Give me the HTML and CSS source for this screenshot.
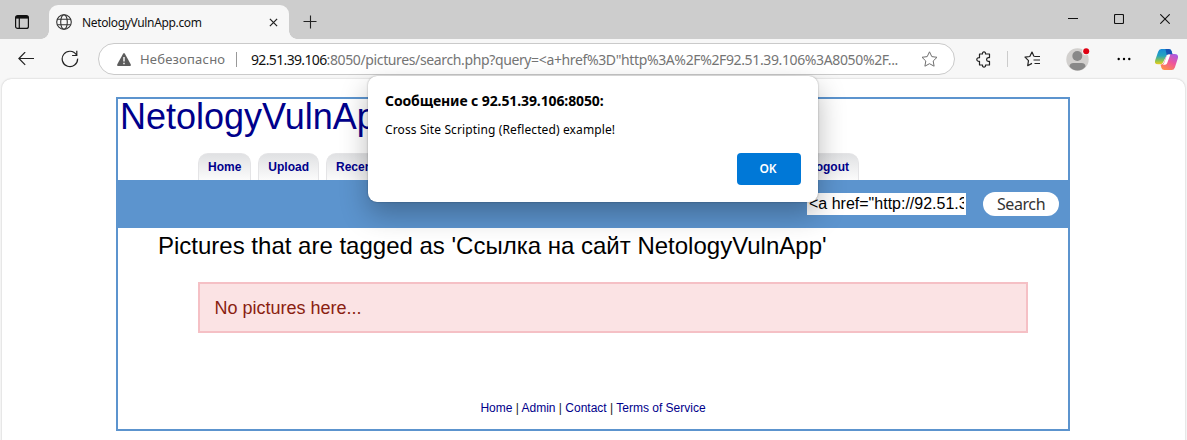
FILE: index.html
```html
<!DOCTYPE html>
<html lang="ru">
<head>
<meta charset="utf-8">
<title>NetologyVulnApp.com</title>
<link rel="stylesheet" href="styles.css">
</head>
<body>
<div class="browser">
  <header class="titlebar">
    <svg class="workspace" width="14" height="14" viewBox="0 0 14 14" fill="none" stroke="#111" stroke-width="1.2"><rect x=".6" y=".6" width="12.8" height="12.8" rx="2"/><path d="M1 2.3h12" stroke-width="2.6"/><path d="M4.3 3v10"/></svg>
    <div class="tab">
      <svg width="16" height="16" viewBox="0 0 16 16" fill="none" stroke="#333" stroke-width="1.1"><circle cx="8" cy="8" r="7.3"/><ellipse cx="8" cy="8" rx="3.3" ry="7.3"/><path d="M1.3 5.3h13.4M1.3 10.7h13.4"/></svg>
      <span class="tab-title">NetologyVulnApp.com</span>
      <svg width="9" height="9" viewBox="0 0 10 10" stroke="#222" stroke-width="1.4"><path d="M1 1l8 8M9 1L1 9"/></svg>
    </div>
    <svg class="plus" width="14" height="14" viewBox="0 0 14 14" stroke="#222" stroke-width="1.1"><path d="M7.5 .5v13M.5 6.5h13"/></svg>
    <div class="window-buttons">
      <svg width="10" height="10" viewBox="0 0 10 10" stroke="#111"><path d="M0 4.5h10"/></svg>
      <svg width="10" height="10" viewBox="0 0 10 10" fill="none" stroke="#111" stroke-width="1.1"><rect x=".5" y=".5" width="9" height="9" rx="1"/></svg>
      <svg width="10" height="10" viewBox="0 0 10 10" stroke="#111" stroke-width="1.1"><path d="M.3 .3l9.4 9.4M9.7 .3L.3 9.7"/></svg>
    </div>
  </header>
  <div class="toolbar">
    <svg class="back" width="16" height="14" viewBox="0 0 16 14" fill="none" stroke="#222" stroke-width="1.2"><path d="M16 6.5H1M7.2 .1L.9 6.5l6.3 6.4"/></svg>
    <svg class="reload" width="18" height="18" viewBox="0 0 18 18" fill="none" stroke="#222" stroke-width="1.2"><path d="M16.6 8.6A7.7 7.7 0 1 1 15.4 4.8M15.8 .8v4.7h-4.7"/></svg>
    <div class="address">
      <svg width="14" height="13" viewBox="0 0 14 13"><path d="M6.1.7Q7-.6 7.9.7l5.8 10.6Q14.3 13 13 13H1Q-.3 13 .3 11.3z" fill="#5c5c5c"/><path d="M7 4v4.6M7 9.8v1.5" stroke="#fff" stroke-width="1.4"/></svg>
      <span class="insecure">Небезопасно</span>
      <span class="bar"></span>
      <span class="url"><b>92.51.39.106</b>:8050/pictures/search.php?query=&lt;a+href%3D"http%3A%2F%2F92.51.39.106%3A8050%2F...</span>
      <svg class="star" width="17" height="16" viewBox="0 0 17 16" fill="none" stroke="#707070" stroke-linejoin="round"><path d="M8.5.8l2.3 4.8 5.2.7-3.8 3.7.9 5.2-4.6-2.5-4.6 2.5.9-5.2L1 6.3l5.2-.7z"/></svg>
    </div>
    <svg class="puzzle" width="16" height="17" viewBox="0 0 16 17" fill="none" stroke="#222" stroke-width="1.2" stroke-linejoin="round"><path d="M3.5 3h3C6 .2 10 .2 9.5 3h4v3.6h-1.2c-2.3.2-2.3 3.6 0 3.8h1.2V14h-4c.5 2.8-3.5 2.8-3 0h-3v-3.7c-3.6.4-3.6-4 0-3.6z"/></svg>
    <span class="separator"></span>
    <svg class="favorites" width="17" height="16" viewBox="0 0 17 16" fill="none" stroke="#222" stroke-width="1.2" stroke-linejoin="round"><path d="M10 5.5L8 1 5.8 5.5 1 6.2l3.5 3.5-.8 5 4.3-2.3M10.3 5.5H16M9.5 9H16M10.5 12.5H16"/></svg>
    <svg class="avatar" width="24" height="24" viewBox="0 0 24 24"><circle cx="11.5" cy="12.5" r="11.2" fill="#d2d0ce"/><circle cx="11.3" cy="9" r="5" fill="#888"/><path d="M3.5 19.5q0-3.5 4-3.5h8q4 0 4 3.5-3 4-8 4t-8-4z" fill="#888"/><circle cx="20.2" cy="4.2" r="4" fill="#f7f7f7"/><circle cx="20.2" cy="4.2" r="3" fill="#df0012"/></svg>
    <svg class="more" width="14" height="4" viewBox="0 0 14 4"><circle cx="1.7" cy="2" r="1.2"/><circle cx="7" cy="2" r="1.2"/><circle cx="12.3" cy="2" r="1.2"/></svg>
    <svg class="copilot" width="23" height="21" viewBox="0 0 22 20.5" preserveAspectRatio="none">
      <defs>
        <linearGradient id="cool" x1="0" y1="0" x2="0" y2="1"><stop stop-color="#168ad8"/><stop offset=".45" stop-color="#26a5bd"/><stop offset=".75" stop-color="#8bc252"/><stop offset="1" stop-color="#f2cd16"/></linearGradient>
        <linearGradient id="warm" x1=".9" y1="0" x2=".3" y2="1"><stop stop-color="#a35be8"/><stop offset=".5" stop-color="#ee549c"/><stop offset="1" stop-color="#ff8b4a"/></linearGradient>
      </defs>
      <path d="M6 0h7q2.2 0 2.8 2l.9 3.2h-3.5q-2 0-2.7 2.1L8.2 12q-.9 3-3.2 3H3q-4 0-2.8-4L3 2.6Q3.8 0 6 0z" fill="url(#cool)"/>
      <path d="M16 20.5H9q-2.2 0-2.8-2l-.9-3.2q2.6 0 3.5-2.7l1.8-5Q11.6 5 14 5h5q4 0 2.8 4.2L19 18q-.8 2.5-3 2.5z" fill="url(#warm)"/>
      <path d="M10 0h3q2.2 0 2.8 2l.9 3.2h-3.5q-1.3 0-1.9.8z" fill="#1853b5"/>
      <path d="M11.3 6.4q.6-1 2.2-1h1.2L11.6 14q-.5 1.4-1.9 1.4H7.4q.9-.6 1.3-1.7z" fill="#fff"/>
    </svg>
  </div>
  <main class="viewport">
    <div class="site">
      <h1>NetologyVulnApp.com</h1>
      <nav class="menu"><a>Home</a><a>Upload</a><a>Recent</a><a class="logout">Logout</a></nav>
      <div class="searchbar"><div class="query">&lt;a href="http://92.51.39.106:8050/"&gt;</div><button>Search</button></div>
      <h2>Pictures that are tagged as 'Ссылка на сайт NetologyVulnApp'</h2>
      <div class="notice">No pictures here...</div>
      <footer><a>Home</a> | <a>Admin</a> | <a>Contact</a> | <a>Terms of Service</a></footer>
    </div>
  </main>
  <div class="dialog" role="dialog">
    <strong>Сообщение с 92.51.39.106:8050:</strong>
    <p>Cross Site Scripting (Reflected) example!</p>
    <button>OK</button>
  </div>
</div>
</body>
</html>
```
FILE: styles.css
```css
* { box-sizing: border-box; }
body { margin: 0; font-family: "Liberation Sans", Arial, sans-serif; background: #f7f7f7; overflow: hidden; }
svg { display: block; flex: none; }
.browser { position: relative; width: 1187px; height: 440px; overflow: hidden; font-family: "Noto Sans", sans-serif; }
.titlebar { display: flex; height: 39px; background: #cdcdcd; }
.workspace { margin: 15px 20px 0 15px; }
.tab { position: relative; display: flex; align-items: center; width: 240px; height: 34px; margin-top: 5px; padding: 0 11px 0 7px; background: #f7f7f7; border-radius: 9px 9px 0 0; }
.tab::before, .tab::after { content: ""; position: absolute; bottom: 0; width: 8px; height: 8px; }
.tab::before { left: -8px; background: radial-gradient(circle at 0 0, #cdcdcd 7.5px, #f7f7f7 8px); }
.tab::after { right: -8px; background: radial-gradient(circle at 100% 0, #cdcdcd 7.5px, #f7f7f7 8px); }
.tab-title { flex: 1; margin-left: 10px; font-size: 12px; color: #111; white-space: nowrap; letter-spacing: -.35px; }
.plus { margin: 15px 0 0 14px; }
.window-buttons { display: flex; gap: 36px; margin: 14px 17px 0 auto; }
.toolbar { display: flex; align-items: center; height: 40px; background: #f7f7f7; }
.back { margin-left: 18px; }
.reload { margin-left: 27px; }
.address { display: flex; align-items: center; width: 857px; height: 32px; margin-left: 19px; padding: 0 16px 0 18px; background: #fff; border: 1px solid #cacaca; border-radius: 16px; white-space: nowrap; }
.insecure { width: 85px; margin-left: 9px; font-size: 13px; color: #707070; letter-spacing: .2px; }
.bar { width: 1px; height: 15px; margin: 0 14px 0 11px; background: #999; }
.url { font-size: 14px; color: #757575; letter-spacing: -.37px; }
.url b { font-weight: 400; color: #111; letter-spacing: -.65px; }
.star { margin-left: auto; }
.puzzle { margin-left: 21px; }
.separator { width: 1px; height: 16px; margin: 0 16px 0 15px; background: #ccc; }
.favorites { margin-right: 25px; }
.avatar { margin-right: 27px; }
.copilot { margin-left: 24px; }
.viewport { width: 1183px; height: 372px; margin-left: 2px; padding: 18px 0 0 114px; background: #fff; border-radius: 9px 9px 0 0; box-shadow: 0 0 2px #bbb; }
.site { width: 954px; height: 334px; border: 2px solid #5c94ce; font-family: "Liberation Sans", Arial, sans-serif; }
h1 { height: 54px; margin: 0; padding-left: 2px; font-weight: 400; font-size: 36px; line-height: 36px; color: #00008b; }
.menu { display: flex; gap: 7px; width: 661px; height: 27px; margin-left: 80px; }
.menu a { padding: 0 9px; border: 1px solid #e4e4e6; border-bottom: 0; border-radius: 10px 10px 0 0; background: linear-gradient(#e0e1e3, #fbfbfb); font-size: 12px; font-weight: 700; line-height: 26px; color: #00008b; }
.menu .logout { margin-left: auto; }
.searchbar { display: flex; justify-content: flex-end; align-items: center; gap: 17px; height: 48px; padding-right: 9px; background: #5c94ce; }
.query { width: 159px; height: 22px; padding: 0 2px; background: #fff; overflow: clip; overflow-clip-margin: content-box; white-space: nowrap; font-size: 16px; line-height: 21px; }
.searchbar button { width: 76px; height: 24px; padding: 0; border: 0; border-radius: 12px; background: #fff; color: #333; font: 16px/23px "Noto Sans", sans-serif; letter-spacing: -.4px; }
h2 { margin: 4px 0 0 40px; font-size: 24px; line-height: 28px; font-weight: 400; color: #000; white-space: nowrap; }
.notice { width: 830px; height: 51px; margin: 22px 0 0 80px; padding-left: 14.5px; border: 2px solid #f5c0c5; background: #fbe3e4; color: #8a1f11; font-size: 18px; line-height: 49px; }
footer { margin-top: 68px; text-align: center; font-size: 12px; line-height: 14px; color: #222; }
footer a { color: #00008b; }
.dialog { position: absolute; left: 368px; top: 76px; display: flex; flex-direction: column; width: 450px; height: 126px; padding: 15px 17px 17px; background: #fff; border-radius: 9px; box-shadow: 0 0 2px rgba(0,0,0,.35), 0 12px 28px rgba(0,0,0,.28); color: #000; }
.dialog strong { font-size: 14px; line-height: 20px; letter-spacing: -.11px; }
.dialog p { margin: 10px 0 0; font-size: 12px; line-height: 18px; letter-spacing: .12px; }
.dialog button { align-self: flex-end; width: 64px; height: 32px; margin-top: auto; padding: 0 8px 0 6px; border: 0; border-radius: 4px; background: #0078d7; color: #fff; font: 600 12px/30px "Noto Sans", sans-serif; letter-spacing: -.2px; }
```
